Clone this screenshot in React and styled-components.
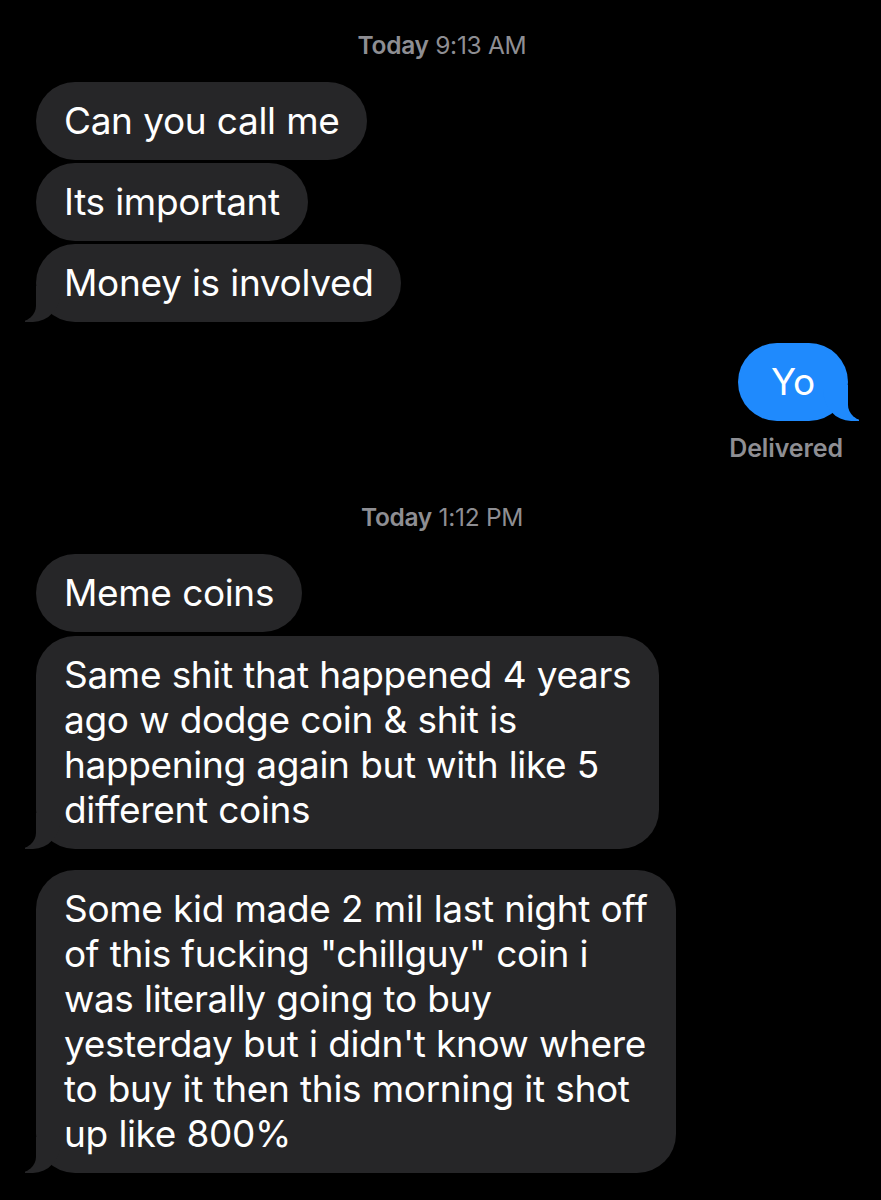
import styled, { createGlobalStyle } from "styled-components";

const GlobalStyle = createGlobalStyle`
  html, body {
    margin: 0;
    padding: 0;
    background: #000;
  }
  body {
    font-family: Inter, "Noto Sans", sans-serif;
    -webkit-font-smoothing: antialiased;
  }
`;

const BUBBLE_GRAY = "#262628";
const BUBBLE_BLUE = "#1f8afd";

const Thread = styled.main`
  display: flex;
  flex-direction: column;
  width: 881px;
  height: 1200px;
  overflow: hidden;
  background: #000;
  padding: 31px 33px 0 36px;
  box-sizing: border-box;
`;

const Stamp = styled.div`
  align-self: center;
  margin: 0 0 23px;
  font-size: 24.5px;
  line-height: 28px;
  color: #8e8e93;
  letter-spacing: -0.3px;

  b {
    font-weight: 600;
  }
`;

const Group = styled.div`
  display: flex;
  flex-direction: column;
  align-items: ${({ $me }) => ($me ? "flex-end" : "flex-start")};
  gap: ${({ $gap }) => $gap ?? 3}px;
  margin-bottom: ${({ $after }) => $after ?? 21}px;
`;

const Bubble = styled.div`
  position: relative;
  min-width: ${({ $me }) => ($me ? 54 : 0)}px;
  padding: 16px 28px 17px;
  border-radius: 39px;
  background: ${({ $me }) => ($me ? BUBBLE_BLUE : BUBBLE_GRAY)};
  color: #fff;
  font-size: 37px;
  line-height: 45px;
  letter-spacing: -0.35px;
  word-spacing: 0.5px;
  text-align: ${({ $me }) => ($me ? "center" : "left")};
  white-space: nowrap;

  ${({ $tail, $me }) =>
    $tail &&
    `
    &::before {
      content: "";
      position: absolute;
      bottom: 0;
      ${$me ? "right: -11px;" : "left: -11px;"}
      width: 36px;
      height: 36px;
      background: ${$me ? BUBBLE_BLUE : BUBBLE_GRAY};
      ${$me ? "border-bottom-left-radius: 28px 32px;" : "border-bottom-right-radius: 28px 32px;"}
    }
    &::after {
      content: "";
      position: absolute;
      bottom: 0;
      ${$me ? "right: -40px;" : "left: -40px;"}
      width: 40px;
      height: 36px;
      background: #000;
      ${$me ? "border-bottom-left-radius: 18px 16px;" : "border-bottom-right-radius: 18px 16px;"}
    }
  `}
`;

const Status = styled.div`
  align-self: flex-end;
  margin: 13px 5px 41px 0;
  font-size: 25px;
  line-height: 28px;
  font-weight: 600;
  color: #8e8e93;
  letter-spacing: -0.1px;
`;

const them = [
  { lines: ["Can you call me"] },
  { lines: ["Its important"] },
  { lines: ["Money is involved"], tail: true },
];

const later = [
  [
    { lines: ["Meme coins"] },
    {
      lines: [
        "Same shit that happened 4 years",
        "ago w dodge coin & shit is",
        "happening again but with like 5",
        "different coins",
      ],
      tail: true,
    },
  ],
  [
    {
      lines: [
        "Some kid made 2 mil last night off",
        'of this fucking "chillguy" coin i',
        "was literally going to buy",
        "yesterday but i didn't know where",
        "to buy it then this morning it shot",
        "up like 800%",
      ],
      tail: true,
    },
  ],
];

const Text = ({ lines }) =>
  lines.map((line, i) => (
    <span key={i}>
      {i > 0 && <br />}
      {line}
    </span>
  ));

export default function App() {
  return (
    <>
      <GlobalStyle />
      <Thread>
        <Stamp>
          <b>Today</b> 9:13 AM
        </Stamp>
        <Group>
          {them.map((m) => (
            <Bubble key={m.lines[0]} $tail={m.tail}>
              <Text lines={m.lines} />
            </Bubble>
          ))}
        </Group>
        <Group $me $after={0}>
          <Bubble $me $tail>
            Yo
          </Bubble>
        </Group>
        <Status>Delivered</Status>
        <Stamp>
          <b>Today</b> 1:12 PM
        </Stamp>
        {later.map((group, i) => (
          <Group key={i} $gap={4}>
            {group.map((m) => (
              <Bubble key={m.lines[0]} $tail={m.tail}>
                <Text lines={m.lines} />
              </Bubble>
            ))}
          </Group>
        ))}
      </Thread>
    </>
  );
}
